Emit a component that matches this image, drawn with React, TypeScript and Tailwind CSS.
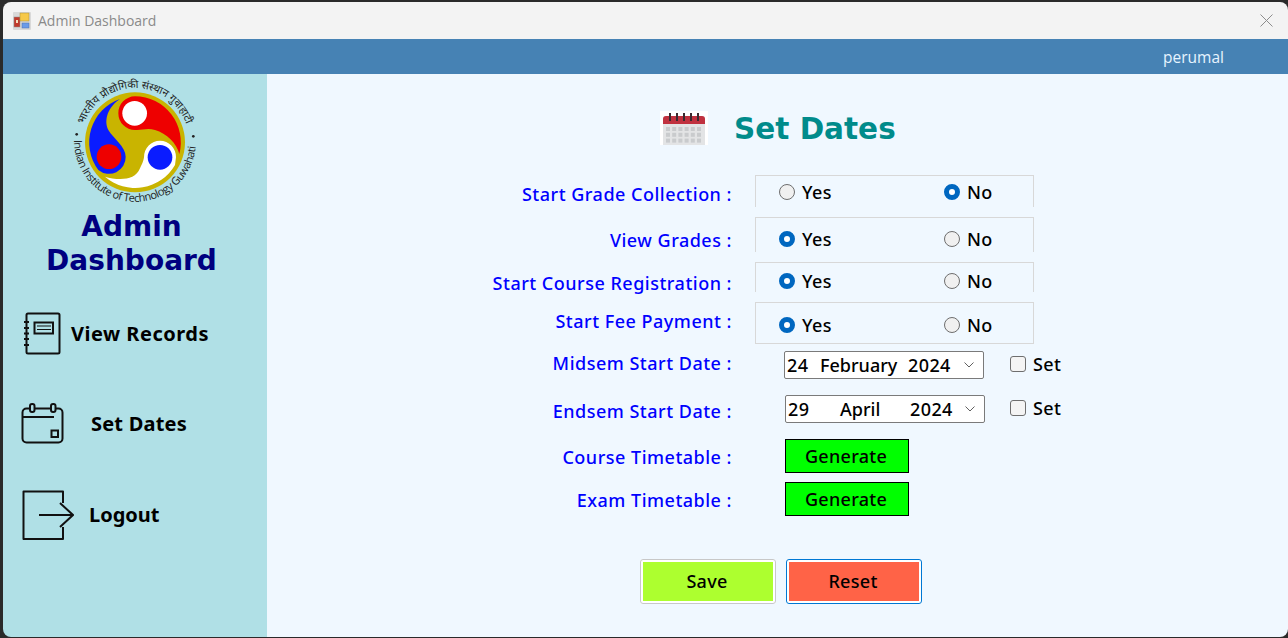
import React from "react";

const bodyFont = "font-['Noto_Sans',sans-serif]";

function AppIcon() {
  return (
    <svg width="18" height="18" viewBox="0 0 18 18" className="shrink-0">
      <rect width="18" height="18" rx="1" fill="#d9d9d9" />
      <rect x="1" y="5" width="6" height="10" fill="#c0392b" stroke="#8f8f8f" strokeWidth="0.5" />
      <rect x="3" y="8" width="2" height="3" fill="#f3e0c0" />
      <rect x="7" y="1" width="9" height="8" fill="#f7c948" stroke="#a98f3a" strokeWidth="0.5" />
      <rect x="9" y="11" width="7" height="5" fill="#6b9be8" stroke="#4a6fb0" strokeWidth="0.5" />
    </svg>
  );
}

function Logo() {
  return (
    <svg width="150" height="135" viewBox="0 0 450 405" className="shrink-0">
      <defs>
        <path id="logoBottom" d="M42 195 A183 183 0 0 0 408 200" />
        <path id="logoTop" d="M62 202 A163 163 0 0 1 388 202" />
      </defs>
      <circle cx="225" cy="202" r="150" fill="#c9b400" />
      <path d="M180 72 A138 138 0 0 0 115 285 A50 50 0 0 0 197 245 C197 215 160 190 145 165 C130 135 145 95 180 72Z" fill="#0a1cff" />
      <path d="M175 115 A50 50 0 0 1 225 64 A138 138 0 0 1 358 237 C350 205 320 175 285 165 C260 158 245 167 225 165 A50 50 0 0 1 175 115Z" fill="#ee0000" />
      <path d="M252 247 A48 50 0 0 1 348 247 L345 270 A138 138 0 0 1 135 305 C170 315 225 320 240 280 C247 265 250 260 252 247Z" fill="#ffffff" />
      <circle cx="224" cy="115" r="37" fill="#ffffff" />
      <circle cx="147" cy="245" r="37" fill="#ee0000" />
      <circle cx="300" cy="247" r="37" fill="#0a1cff" />
      <circle cx="50" cy="178" r="4" fill="#222" />
      <circle cx="400" cy="184" r="4" fill="#222" />
      <text fontFamily="'Open Sans',sans-serif" fontSize="33" fill="#222">
        <textPath href="#logoBottom" textLength="560" lengthAdjust="spacing">Indian Institute of Technology Guwahati</textPath>
      </text>
      <text fontFamily="'Noto Sans',sans-serif" fontSize="32" fill="#222" textAnchor="middle">
        <textPath href="#logoTop" startOffset="50%">भारतीय प्रौद्योगिकी संस्थान गुवाहाटी</textPath>
      </text>
    </svg>
  );
}

function NotebookIcon() {
  return (
    <svg width="50" height="50" viewBox="0 0 50 50" fill="none" stroke="#111" strokeWidth="2" className="shrink-0">
      <rect x="6.5" y="4.5" width="33" height="40" rx="1.5" />
      <rect x="14.5" y="13.5" width="18.5" height="11" />
      <path d="M17 17 H31 M17 20.5 H31" strokeWidth="1" />
      <path d="M4 13 H9 M4 19 H9 M4 24.5 H9 M4 30 H9 M4 36 H9" />
    </svg>
  );
}

function CalendarIcon() {
  return (
    <svg width="50" height="50" viewBox="0 0 50 50" fill="none" stroke="#111" strokeWidth="2" className="shrink-0">
      <rect x="2.5" y="9.5" width="40" height="34" rx="4" />
      <rect x="10" y="5" width="4.5" height="8" rx="2" fill="#b0e0e6" />
      <rect x="31" y="5" width="4.5" height="8" rx="2" fill="#b0e0e6" />
      <path d="M3 18 H34" />
      <rect x="31.5" y="31.5" width="6.5" height="6.5" />
    </svg>
  );
}

function LogoutIcon() {
  return (
    <svg width="54" height="50" viewBox="0 0 54 50" fill="none" stroke="#111" strokeWidth="2" className="shrink-0">
      <path d="M43 13 V1.5 H3.5 V49 H43 V37" strokeLinejoin="round" />
      <path d="M19 25 H53 M40 13 L53 25 L40 37" />
    </svg>
  );
}

function TitleCalendar() {
  const cells = [];
  for (let row = 0; row < 3; row++) {
    for (let col = 0; col < 6; col++) {
      cells.push(<rect key={`${row}-${col}`} x={6 + col * 6.2} y={16 + row * 5.8} width="4" height="4" fill="#c9cbcd" />);
    }
  }
  return (
    <svg width="48" height="34" viewBox="0 0 48 34" className="shrink-0">
      <rect width="48" height="34" fill="#ffffff" />
      <path d="M3 34 V8 Q3 5 6 5 H42 Q45 5 45 8 V34Z" fill="#e3e4e5" />
      <path d="M3 13 V8 Q3 5 6 5 H42 Q45 5 45 8 V13Z" fill="#c0313f" />
      {[10, 17, 24, 31, 38].map((x) => (
        <rect key={x} x={x - 1} y="2" width="2" height="8" fill="#3a2a30" />
      ))}
      {cells}
    </svg>
  );
}

function Radio({ checked, label, className }: { checked: boolean; label: string; className: string }) {
  return (
    <label className={`flex items-center gap-[7px] ${className}`}>
      <input
        type="radio"
        checked={checked}
        readOnly
        className={
          checked
            ? "appearance-none w-4 h-4 rounded-full bg-white border-[5px] border-[#0067c0]"
            : "appearance-none w-4 h-4 rounded-full bg-[#f0f0f0] border border-[#6e6e6e]"
        }
      />
      <span className="text-lg leading-6 font-medium tracking-[0.4px] text-black">{label}</span>
    </label>
  );
}

function Label({ text, className }: { text: string; className: string }) {
  return (
    <div className={`w-[465px] shrink-0 text-right text-lg leading-6 font-medium tracking-[0.5px] text-[#0000ff] ${className}`}>{text}</div>
  );
}

const radioRows = [
  { label: "Start Grade Collection :", row: "h-[42px]", labelPad: "pt-[7px]", box: "h-8 pt-[4px] border-b-0", yes: false },
  { label: "View Grades :", row: "h-[45px]", labelPad: "pt-[11px]", box: "h-[35px] pt-[9px] border-b-0", yes: true },
  { label: "Start Course Registration :", row: "h-10", labelPad: "pt-[9px]", box: "h-[30px] pt-[6px] border-b-0", yes: true },
  { label: "Start Fee Payment :", row: "h-[49px]", labelPad: "pt-[7px]", box: "h-[42px] pt-[10px]", yes: true },
];

const dateRows = [
  { label: "Midsem Start Date :", labelPad: "", box: "ml-[52px]", check: "ml-[26px]", day: "24", dayW: "w-[33px]", month: "February", monthW: "w-[88px]" },
  { label: "Endsem Start Date :", labelPad: "pt-[4px]", box: "ml-[53px]", check: "ml-[25px]", day: "29", dayW: "w-[52px]", month: "April", monthW: "w-[70px]" },
];

const timetableRows = [
  { label: "Course Timetable :", row: "h-[43px]" },
  { label: "Exam Timetable :", row: "h-[77px]" },
];

export default function App() {
  return (
    <div className={`w-[1288px] h-[638px] overflow-hidden bg-[#2a2a2a] pt-[2px] pl-[3px] pb-px ${bodyFont}`}>
      <div className="h-full flex flex-col rounded-lg overflow-hidden">
        {/* Title bar */}
        <div className="h-[37px] shrink-0 bg-[#f3f3f3] flex items-center pl-[10px] pr-[15px]">
          <AppIcon />
          <span className="ml-[7px] text-sm text-[#8a8a8a] font-['Open_Sans',sans-serif]">Admin Dashboard</span>
          <svg width="13" height="13" viewBox="0 0 13 13" stroke="#8c8c8c" strokeWidth="1" className="ml-auto">
            <path d="M0.5 0.5 L12.5 12.5 M12.5 0.5 L0.5 12.5" />
          </svg>
        </div>

        {/* Top bar */}
        <div className="h-[35px] shrink-0 bg-[#4682b4] flex items-center justify-end pr-[64px]">
          <span className="text-[15.5px] pt-[2px] text-[#e6f4ff] font-['Open_Sans',sans-serif]">perumal</span>
        </div>

        <div className="flex-1 flex min-h-0">
          {/* Sidebar */}
          <aside className="w-[264px] shrink-0 bg-[#b0e0e6] pt-px">
            <div className="pl-[57px]">
              <Logo />
            </div>
            <h1 className="w-[257px] text-center text-[28px] leading-[34px] font-bold text-[#000080] font-['DejaVu_Sans',sans-serif]">
              Admin
              <br />
              Dashboard
            </h1>
            <nav className="mt-[11px] text-[20px] font-bold text-black">
              <div className="h-[90px] flex items-center pl-[17px]">
                <NotebookIcon />
                <span className="ml-px tracking-[0.5px]">View Records</span>
              </div>
              <div className="h-[90px] flex items-center pl-[17px]">
                <CalendarIcon />
                <span className="ml-[21px] tracking-[0.2px]">Set Dates</span>
              </div>
              <div className="h-[92px] flex items-center pl-[17px]">
                <LogoutIcon />
                <span className="ml-[15px]">Logout</span>
              </div>
            </nav>
          </aside>

          {/* Form */}
          <main className="flex-1 bg-[#f0f8ff] pt-[37px]">
            <div className="h-[34px] flex items-center ml-[393px] gap-[26px]">
              <TitleCalendar />
              <h2 className="text-[29.5px] leading-[34px] pt-px h-[34px] font-bold text-[#008b8b] font-['DejaVu_Sans',sans-serif]">Set Dates</h2>
            </div>

            <div className="mt-[30px]">
              {radioRows.map((r) => (
                <div key={r.label} className={`flex ${r.row}`}>
                  <Label text={r.label} className={r.labelPad} />
                  <div className={`ml-[23px] w-[279px] flex items-start border border-[#d8d8d8] ${r.box}`}>
                    <Radio checked={r.yes} label="Yes" className="ml-[23px] w-[165px]" />
                    <Radio checked={!r.yes} label="No" className="" />
                  </div>
                </div>
              ))}

              {dateRows.map((r) => (
                <div key={r.label} className="flex h-11">
                  <Label text={r.label} className={r.labelPad} />
                  <div className={`h-7 w-[200px] flex items-center bg-white border border-[#7a7a7a] rounded-[2px] pl-[2px] pr-[9px] text-black text-lg font-medium tracking-[0.4px] ${r.box}`}>
                    <span className={`leading-6 ${r.dayW}`}>{r.day}</span>
                    <span className={`leading-6 tracking-normal ${r.monthW}`}>{r.month}</span>
                    <span className="leading-6 flex-1">2024</span>
                    <svg width="10" height="6" viewBox="0 0 10 6" fill="none" stroke="#606060" strokeWidth="1">
                      <path d="M0.5 0.5 L5 5 L9.5 0.5" />
                    </svg>
                  </div>
                  <label className={`h-6 mt-px flex items-center gap-[7px] ${r.check}`}>
                    <input type="checkbox" readOnly className="appearance-none w-4 h-4 rounded-[3px] bg-[#f4f4f4] border border-[#6e6e6e]" />
                    <span className="text-lg leading-6 font-medium tracking-[0.4px] text-black">Set</span>
                  </label>
                </div>
              ))}

              {timetableRows.map((r) => (
                <div key={r.label} className={`flex ${r.row}`}>
                  <Label text={r.label} className="pt-[6px]" />
                  <button className="ml-[53px] w-[124px] h-[34px] pr-[2px] bg-[#00ff00] border border-black text-lg font-medium tracking-[0.3px] text-black">Generate</button>
                </div>
              ))}

              <div className="flex ml-[373px] gap-[10px]">
                <button className="w-[136px] h-[45px] pb-[2px] pr-[2px] bg-[#adff2f] border-[3px] border-white rounded-[3px] outline outline-1 outline-[#c8c8c8] -outline-offset-1 text-lg font-medium tracking-[0.3px] text-black">Save</button>
                <button className="w-[136px] h-[45px] pb-[2px] pr-[2px] bg-[#ff6347] border-[3px] border-white rounded-[3px] outline outline-1 outline-[#0078d4] -outline-offset-1 text-lg font-medium tracking-[0.3px] text-black">Reset</button>
              </div>
            </div>
          </main>
        </div>
      </div>
    </div>
  );
}
